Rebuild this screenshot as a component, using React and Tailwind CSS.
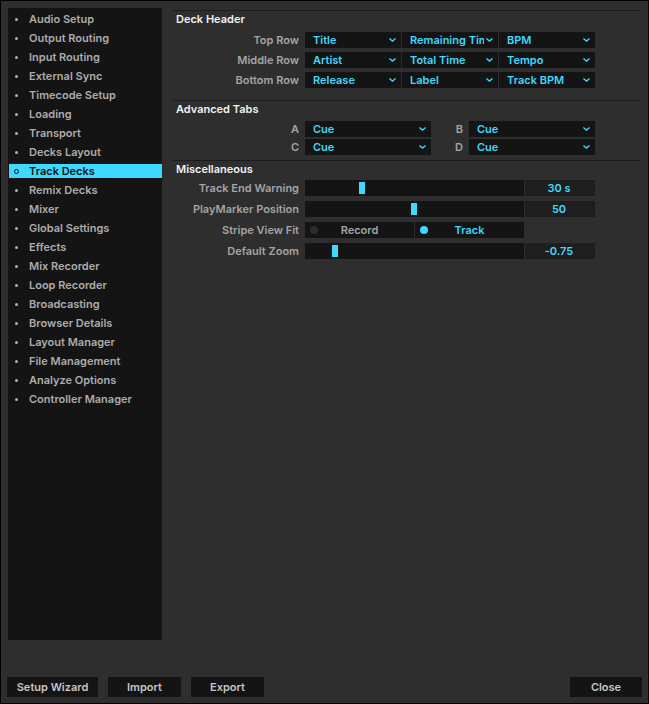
// App.jsx
// Preferences window: page list on the left, Track Decks settings on the right

import { useState } from 'react'

const PAGES = [
  'Audio Setup',
  'Output Routing',
  'Input Routing',
  'External Sync',
  'Timecode Setup',
  'Loading',
  'Transport',
  'Decks Layout',
  'Track Decks',
  'Remix Decks',
  'Mixer',
  'Global Settings',
  'Effects',
  'Mix Recorder',
  'Loop Recorder',
  'Broadcasting',
  'Browser Details',
  'Layout Manager',
  'File Management',
  'Analyze Options',
  'Controller Manager',
]

const FIELDS = ['Title', 'Artist', 'Release', 'Label', 'Remaining Time', 'Total Time', 'BPM', 'Tempo', 'Track BPM']
const TABS = ['Cue', 'Move', 'Grid']

const HEADER_ROWS = [
  { label: 'Top Row', values: ['Title', 'Remaining Time', 'BPM'] },
  { label: 'Middle Row', values: ['Artist', 'Total Time', 'Tempo'] },
  { label: 'Bottom Row', values: ['Release', 'Label', 'Track BPM'] },
]

const Dropdown = ({ id, label, options, initial }) => {
  const [value, setValue] = useState(initial)

  return (
    <div className="relative min-w-0 h-4 bg-[#141414]">
      <select
        id={id}
        aria-label={label}
        value={value}
        onChange={(e) => setValue(e.target.value)}
        className="appearance-none block w-full h-4 pl-2 pr-3.5 bg-transparent text-[#3fd8ff] leading-4 outline-none"
      >
        {options.map((option) => (
          <option key={option} className="bg-[#141414]">{option}</option>
        ))}
      </select>
      <svg
        className="absolute right-[5px] top-1.5 pointer-events-none"
        width="7"
        height="4"
        viewBox="0 0 7 4"
        fill="none"
        stroke="#3fd8ff"
        strokeWidth="1.3"
      >
        <path d="M0.4 0.5 L3.5 3.1 L6.6 0.5" />
      </svg>
    </div>
  )
}

const Section = ({ title, children }) => (
  <section className="border-t border-[#1c1c1c]">
    <h2 className="h-4 leading-4 pl-[3px] text-[#f2f2f2] font-semibold">{title}</h2>
    {children}
  </section>
)

const Row = ({ label, htmlFor, children }) => (
  <div className="grid grid-cols-[132px_minmax(0,1fr)] pr-[45px] leading-4">
    {htmlFor ? (
      <label htmlFor={htmlFor} className="pr-1.5 text-right">{label}</label>
    ) : (
      <span className="pr-1.5 text-right">{label}</span>
    )}
    {children}
  </div>
)

const SliderRow = ({ id, label, min, max, step, initial, unit = '' }) => {
  const [value, setValue] = useState(initial)

  return (
    <Row label={label} htmlFor={id}>
      <div className="grid grid-cols-[minmax(0,1fr)_70px] gap-px">
        <div className="h-4 pl-px pr-0.5 bg-[#141414]">
          <input
            id={id}
            type="range"
            min={min}
            max={max}
            step={step}
            value={value}
            onChange={(e) => setValue(e.target.value)}
            className="appearance-none block w-full h-4 bg-transparent outline-none [&::-webkit-slider-thumb]:appearance-none [&::-webkit-slider-thumb]:w-1.5 [&::-webkit-slider-thumb]:h-3 [&::-webkit-slider-thumb]:bg-[#3fd8ff]"
          />
        </div>
        <output htmlFor={id} className="h-4 pr-0.5 bg-[#1e1e1e] text-[#3fd8ff] text-center">
          {value}{unit}
        </output>
      </div>
    </Row>
  )
}

const FooterButton = ({ className, children }) => (
  <button type="button" className={`h-5 bg-[#141414] hover:bg-[#1e1e1e] text-[#c6c6c6] ${className}`}>
    {children}
  </button>
)

const App = () => {
  const [page, setPage] = useState('Track Decks')
  const [stripeFit, setStripeFit] = useState('Track')

  return (
    <div className="min-h-screen flex flex-col bg-[#2e2e2e] border border-black px-1.5 pt-[7px] pb-1.5 font-['Inter',sans-serif] text-[11px] leading-4 font-semibold text-[#a4a4a4]">
      <div className="flex-1 flex gap-[11px] pl-px pr-0.5">

        {/* Page list */}
        <nav className="w-[154px] shrink-0 bg-[#141414] pl-px pt-1">
          <ul className="flex flex-col gap-[5px]">
            {PAGES.map((name) => (
              <li key={name}>
                <a
                  href="#"
                  onClick={(e) => {
                    e.preventDefault()
                    setPage(name)
                  }}
                  className={`h-3.5 leading-3.5 flex items-center gap-2 pl-1 ${name === page ? 'bg-[#3fd8ff] text-[#141414]' : 'text-[#acacac]'}`}
                >
                  <span className="w-2 flex">
                    {name === page ? (
                      <span className="ml-px w-[5px] h-[5px] rounded-full border border-[#141414]"></span>
                    ) : (
                      <span className="ml-0.5 w-[3px] h-[3px] rounded-full bg-[#b0b0b0]"></span>
                    )}
                  </span>
                  {name}
                </a>
              </li>
            ))}
          </ul>
        </nav>

        {/* Settings */}
        <main className="flex-1 min-w-0 pt-0.5">
          <Section title="Deck Header">
            <div className="flex flex-col gap-1 pt-[5px] pb-3">
              {HEADER_ROWS.map((row) => (
                <Row key={row.label} label={row.label}>
                  <div className="grid grid-cols-3 gap-px">
                    {row.values.map((value, i) => (
                      <Dropdown key={i} label={`${row.label} ${i + 1}`} options={FIELDS} initial={value} />
                    ))}
                  </div>
                </Row>
              ))}
            </div>
          </Section>

          <Section title="Advanced Tabs">
            <div className="flex flex-col gap-0.5 pt-1 pb-[5px]">
              {[['A', 'B'], ['C', 'D']].map(([left, right]) => (
                <Row key={left} label={left} htmlFor={`tab-${left}`}>
                  <div className="grid grid-cols-[minmax(0,1fr)_38px_minmax(0,1fr)]">
                    <Dropdown id={`tab-${left}`} options={TABS} initial="Cue" />
                    <label htmlFor={`tab-${right}`} className="pr-1.5 text-right">{right}</label>
                    <Dropdown id={`tab-${right}`} options={TABS} initial="Cue" />
                  </div>
                </Row>
              ))}
            </div>
          </Section>

          <Section title="Miscellaneous">
            <div className="flex flex-col gap-[5px] pt-[3px]">
              <SliderRow id="end-warning" label="Track End Warning" min={0} max={120} step={1} initial={30} unit=" s" />
              <SliderRow id="playmarker" label="PlayMarker Position" min={0} max={100} step={1} initial={50} />
              <Row label="Stripe View Fit">
                <div className="grid grid-cols-[minmax(0,1fr)_70px] gap-px">
                  <div className="grid grid-cols-2 gap-px">
                    {['Record', 'Track'].map((fit) => (
                      <label
                        key={fit}
                        className={`h-4 flex items-center pl-[5px] pr-[13px] bg-[#141414] ${fit === stripeFit ? 'text-[#3fd8ff]' : ''}`}
                      >
                        <input
                          type="radio"
                          name="stripe-fit"
                          value={fit}
                          checked={fit === stripeFit}
                          onChange={() => setStripeFit(fit)}
                          className="appearance-none w-2 h-2 rounded-full bg-[#2e2e2e] checked:bg-[#3fd8ff]"
                        />
                        <span className="flex-1 text-center">{fit}</span>
                      </label>
                    ))}
                  </div>
                </div>
              </Row>
              <SliderRow id="default-zoom" label="Default Zoom" min={-1} max={1} step={0.01} initial={-0.75} />
            </div>
          </Section>
        </main>
      </div>

      {/* Footer */}
      <footer className="mt-[37px] flex justify-between">
        <div className="flex gap-2.5">
          <FooterButton className="w-[91px]">Setup Wizard</FooterButton>
          <FooterButton className="w-[73px]">Import</FooterButton>
          <FooterButton className="w-[73px]">Export</FooterButton>
        </div>
        <FooterButton className="w-[72px]">Close</FooterButton>
      </footer>
    </div>
  )
}

export default App
